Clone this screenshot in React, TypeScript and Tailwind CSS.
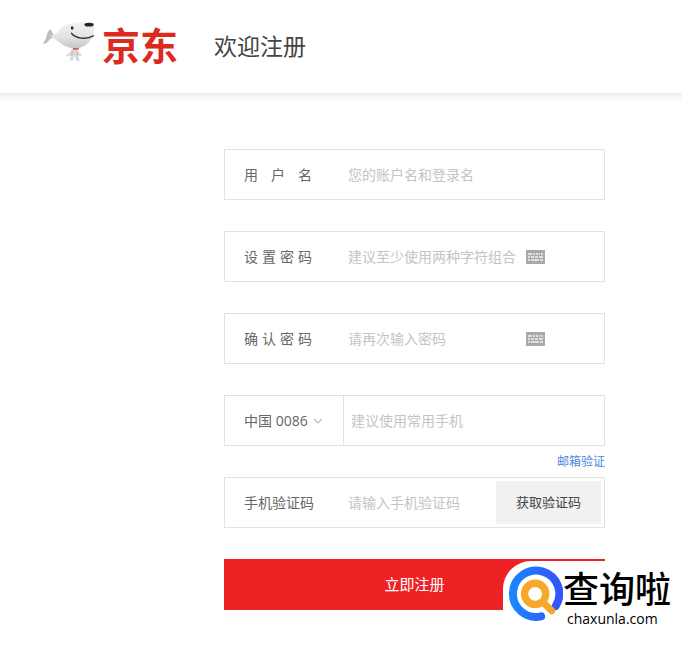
import type { ReactNode } from "react"

function JoyDog() {
    return (
        <svg viewBox="0 0 160 130" className="h-[43px] w-[53px]" aria-hidden="true">
            <defs>
                <linearGradient id="dog" x1="0" y1="0" x2="0" y2="1">
                    <stop offset="0" stopColor="#f4f4f4" />
                    <stop offset="0.6" stopColor="#e2e2e2" />
                    <stop offset="1" stopColor="#c4c4c4" />
                </linearGradient>
            </defs>
            <path d="M24 26c-6 1-10 7-12 15C9 54 5 62 0 68c6 3 12 0 17-8 4-7 11-10 20-11-7-6-9-15-13-23z" fill="#bdbdbd" />
            <path d="M86 84c0 9-5 14-16 19l5 5 10-6-4 17 8 2 6-17 6 17 9-1-3-17 7 3 3-5c-8-4-13-9-14-17z" fill="#d9d9d9" />
            <path d="M20 43c14 3 22-6 32-18C64 11 88 4 114 3c16-2 34-3 39 2 4 5 2 14 1 24-1 8-1 14-5 20-8 16-23 30-46 33-20 2-40-6-54-18-10-8-20-12-29-21z" fill="url(#dog)" />
            <ellipse cx="88" cy="21" rx="4" ry="5" fill="#222" />
            <ellipse cx="139" cy="11" rx="14" ry="6" fill="#222" />
            <path d="M86 37c12 16 45 20 66 8" fill="none" stroke="#333" strokeWidth="4" strokeLinecap="round" />
            <path d="M90 82h18v5H91z" fill="#d9594c" />
            <path d="M89 91l-3 15M103 91l2 14" stroke="#aaa" strokeWidth="2" />
        </svg>
    )
}

function KeyboardIcon() {
    return (
        <svg viewBox="0 0 19 14" className="h-[14px] w-[19px]" aria-hidden="true">
            <path d="M0 0h19v14H0z" fill="#a9a9a9" />
            <path d="M2 4h4M7 4h2M10 4h2M13 4h1M15 4h2M2 7h2M5 7h3M9 7h3M13 7h4M2 10h2M5 10h8M14 10h3" stroke="#f4f4f4" strokeWidth="1.4" />
        </svg>
    )
}

function SearchMark() {
    return (
        <svg viewBox="54 62 166 170" className="h-[57px] w-[55px] shrink-0" aria-hidden="true">
            <defs>
                <linearGradient id="ring" x1="0" y1="0" x2="1" y2="0">
                    <stop offset="0" stopColor="#1a86fb" />
                    <stop offset="1" stopColor="#3355fb" />
                </linearGradient>
            </defs>
            <path d="M154 213A70 70 0 1 1 198 182" fill="none" stroke="url(#ring)" strokeWidth="24" strokeLinecap="round" />
            <circle cx="136" cy="145" r="32" fill="none" stroke="#f9a72b" strokeWidth="22" />
            <path d="M160 171L186 196" stroke="#f9a72b" strokeWidth="21" strokeLinecap="round" />
        </svg>
    )
}

interface FieldProps {
    id: string
    label: string
    placeholder: string
    type?: string
    children?: ReactNode
}

const inputClass = "h-full min-w-0 bg-transparent text-sm text-[#666] outline-none placeholder:text-[#c4c4c4]"

function Field({ id, label, placeholder, type = "text", children }: FieldProps) {
    return (
        <div className="flex h-[51px] items-center border border-[#e2e2e2] pr-[3px] pl-[19px]">
            <label htmlFor={id} className="w-[68px] shrink-0 text-sm whitespace-nowrap text-[#666] [text-align-last:justify]">
                {label}
            </label>
            <input id={id} type={type} placeholder={placeholder} className={`${inputClass} ml-9 flex-1`} />
            {children}
        </div>
    )
}

function KeyboardButton() {
    return (
        <button type="button" aria-label="软键盘" className="mr-14 ml-1">
            <KeyboardIcon />
        </button>
    )
}

export default function App() {
    return (
        <div className="min-h-screen bg-white font-['Open_Sans','Noto_Sans_CJK_SC',sans-serif]">
            <header className="flex h-[93px] items-center pl-[43px] shadow-[0_2px_6px_2px_#ececec]">
                <a href="#" className="flex items-center gap-[6px] pb-1 text-[38px] leading-none font-bold text-[#dc2a1f]">
                    <span className="pb-1"><JoyDog /></span>
                    京东
                </a>
                <h1 className="ml-9 text-[23px] text-[#444]">欢迎注册</h1>
            </header>

            <main className="pt-14 pr-6 pb-6 pl-56">
                <form className="max-w-[381px]">
                    <div className="flex flex-col gap-[31px]">
                        <Field id="username" label="用户名" placeholder="您的账户名和登录名" />
                        <Field id="password" label="设置密码" type="password" placeholder="建议至少使用两种字符组合">
                            <KeyboardButton />
                        </Field>
                        <Field id="confirm" label="确认密码" type="password" placeholder="请再次输入密码">
                            <KeyboardButton />
                        </Field>
                        <div className="flex h-[51px] items-center border border-[#e2e2e2]">
                            <div className="relative h-full w-[119px] shrink-0 border-r border-[#e2e2e2]">
                                <select aria-label="国家" className="h-full w-full appearance-none bg-transparent pl-[19px] text-sm text-[#666] outline-none">
                                    <option>中国 0086</option>
                                </select>
                                <svg viewBox="0 0 10 6" className="pointer-events-none absolute top-[22px] right-5 h-[6px] w-[10px]" aria-hidden="true">
                                    <path d="M1 1l4 4 4-4" fill="none" stroke="#bbb" strokeWidth="1.2" />
                                </svg>
                            </div>
                            <input aria-label="手机号" type="tel" placeholder="建议使用常用手机" className={`${inputClass} ml-[7px] flex-1`} />
                        </div>
                    </div>

                    <div className="flex h-[31px] items-center justify-end">
                        <a href="#" className="text-xs text-[#4a86dc]">邮箱验证</a>
                    </div>

                    <Field id="code" label="手机验证码" placeholder="请输入手机验证码">
                        <button type="button" className="h-[43px] w-[105px] shrink-0 bg-[#f1f1f1] text-[13px] text-[#444]">
                            获取验证码
                        </button>
                    </Field>

                    <div className="relative mt-[31px]">
                        <button type="submit" className="h-[51px] w-full bg-[#ee2224] text-[15px] text-white">
                            立即注册
                        </button>
                        <div className="absolute top-[2px] left-[279px] flex w-[179px] items-start rounded-tl-[28px] bg-white pt-[5px] pl-[5px] text-black">
                            <SearchMark />
                            <div className="pt-1">
                                <p className="text-[36px] leading-[40px] font-medium whitespace-nowrap">查询啦</p>
                                <p className="pl-1 text-sm leading-[18px] font-medium">chaxunla.com</p>
                            </div>
                        </div>
                    </div>
                </form>
            </main>
        </div>
    )
}
